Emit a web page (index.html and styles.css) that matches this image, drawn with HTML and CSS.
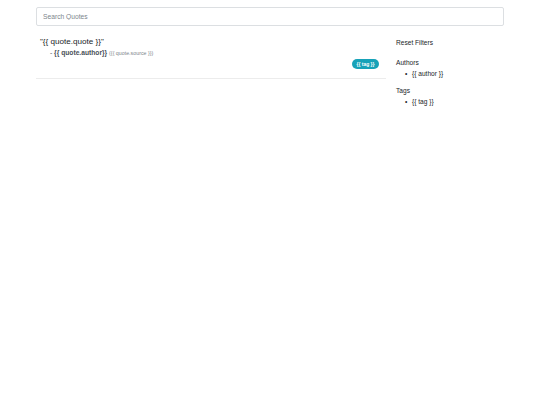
FILE: index.html
```html
<!DOCTYPE html>
<html>
<head>
<meta charset="utf-8">
<link rel="stylesheet" href="styles.css">
</head>
<body>
<div class="container">
  <input class="search" type="text" placeholder="Search Quotes">
  <div class="row">
    <div class="main">
      <div class="quote">
        <h5 class="quote-text">"{{ quote.quote }}"</h5>
        <div class="author">- <b>{{ quote.author}}</b> <span class="source">({{ quote.source }})</span></div>
        <div class="tags"><span class="badge">{{ tag }}</span></div>
      </div>
    </div>
    <div class="side">
      <div class="reset">Reset Filters</div>
      <div class="group">
        <div class="group-title">Authors</div>
        <ul class="list"><li>{{ author }}</li></ul>
      </div>
      <div class="group">
        <div class="group-title">Tags</div>
        <ul class="list"><li>{{ tag }}</li></ul>
      </div>
    </div>
  </div>
</div>
</body>
</html>
```
FILE: styles.css
```css
html, body {
  margin: 0;
  padding: 0;
  background: #fff;
  font-family: "Liberation Sans", Arial, sans-serif;
  color: #212529;
  font-size: 6.6px;
}
.container {
  margin-left: 36px;
  width: 468px;
  padding-top: 7px;
}
.search {
  box-sizing: border-box;
  display: block;
  width: 100%;
  height: 19px;
  border: 1px solid #dcdfe2;
  border-radius: 2px;
  padding: 0 6px;
  font-family: "Liberation Sans", Arial, sans-serif;
  font-size: 6.7px;
  color: #495057;
  outline: none;
}
.search::placeholder {
  color: #7d858c;
}
.row {
  display: flex;
  margin-top: 11px;
}
.main {
  width: 350px;
}
.quote {
  border-bottom: 1px solid #ececec;
  padding-bottom: 9px;
}
.quote-text {
  margin: 0 0 0 4px;
  font-size: 8.1px;
  font-weight: normal;
  line-height: 10px;
  color: #212529;
}
.author {
  padding-left: 14px;
  font-size: 6.7px;
  color: #495057;
  line-height: 10px;
  margin-top: 1px;
}
.author b {
  font-weight: bold;
}
.source {
  font-size: 5.3px;
  color: #7d858c;
}
.tags {
  display: flex;
  justify-content: flex-end;
  padding-right: 7px;
  margin-top: 1px;
}
.badge {
  background: #17a2b8;
  color: #fff;
  font-size: 5px;
  font-weight: bold;
  line-height: 10px;
  height: 10px;
  padding: 0 4.5px;
  border-radius: 5px;
}
.side {
  margin-left: 10px;
  padding-top: 1px;
}
.reset {
  font-size: 6.6px;
  line-height: 10px;
  margin-bottom: 10px;
}
.group {
  margin-bottom: 7px;
}
.group-title {
  font-size: 6.6px;
  line-height: 10px;
}
.list {
  margin: 0;
  padding-left: 9px;
  font-size: 6.6px;
  line-height: 11px;
  list-style: none;
}
.list li::before {
  content: "\2022";
  display: inline-block;
  width: 7px;
}
```
